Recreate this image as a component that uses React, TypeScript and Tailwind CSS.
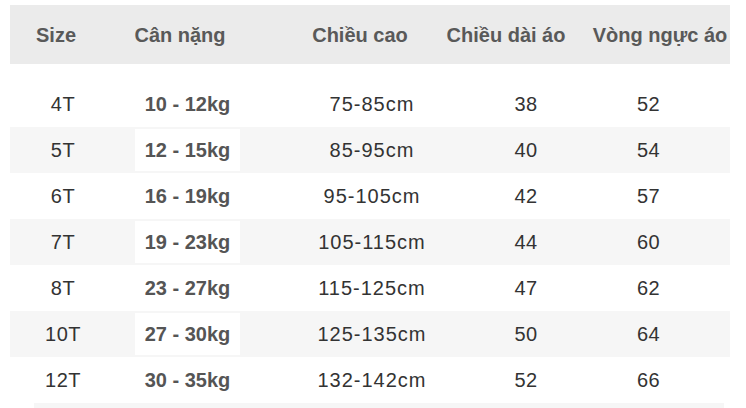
import React from "react";

const rows = [
  { size: "4T", w: "10 - 12kg", h: "75-85cm", d: "38", v: "52" },
  { size: "5T", w: "12 - 15kg", h: "85-95cm", d: "40", v: "54" },
  { size: "6T", w: "16 - 19kg", h: "95-105cm", d: "42", v: "57" },
  { size: "7T", w: "19 - 23kg", h: "105-115cm", d: "44", v: "60" },
  { size: "8T", w: "23 - 27kg", h: "115-125cm", d: "47", v: "62" },
  { size: "10T", w: "27 - 30kg", h: "125-135cm", d: "50", v: "64" },
  { size: "12T", w: "30 - 35kg", h: "132-142cm", d: "52", v: "66" },
];

export default function App() {
  return (
    <div className="w-[746px] h-[408px] bg-white overflow-hidden pt-[5px] pl-[10px]" style={{ fontFamily: '"Liberation Sans", Arial, sans-serif' }}>
      <div className="w-[720px] h-[59px] bg-[#ebebeb] flex items-center text-[20px] font-bold text-[#595959]">
        <div className="w-[92px] flex justify-center whitespace-nowrap">Size</div>
        <div className="w-[156px] flex justify-center whitespace-nowrap">Cân nặng</div>
        <div className="w-[204px] flex justify-center whitespace-nowrap">Chiều cao</div>
        <div className="w-[88px] flex justify-center whitespace-nowrap">Chiều dài áo</div>
        <div className="w-[180px] pl-[40px] flex justify-center whitespace-nowrap">Vòng ngực áo</div>
      </div>
      <div className="h-[17px]" />
      {rows.map((r, i) => {
        const striped = i % 2 === 1;
        return (
          <div
            key={r.size}
            className={`w-[720px] h-[46px] flex items-center ${striped ? "bg-[#f6f6f6]" : "bg-white"}`}
          >
            <div className="w-[106px] flex justify-center text-[20px] text-[#333] tracking-[0.5px]">{r.size}</div>
            <div className="w-[143px] h-full flex justify-center items-center">
              <div className={`h-[42px] px-[10px] flex items-center text-[20px] font-bold text-[#555] whitespace-nowrap ${striped ? "bg-white" : ""}`}>
                {r.w}
              </div>
            </div>
            <div className="w-[226px] flex justify-center text-[20px] text-[#333] tracking-[1px] whitespace-nowrap">{r.h}</div>
            <div className="w-[82px] flex justify-center text-[20px] text-[#333] tracking-[0.5px]">{r.d}</div>
            <div className="w-[163px] flex justify-center text-[20px] text-[#333] tracking-[0.5px]">{r.v}</div>
          </div>
        );
      })}
      <div className="ml-[24px] w-[690px] h-[6px] bg-[#f6f6f6]" />
    </div>
  );
}
